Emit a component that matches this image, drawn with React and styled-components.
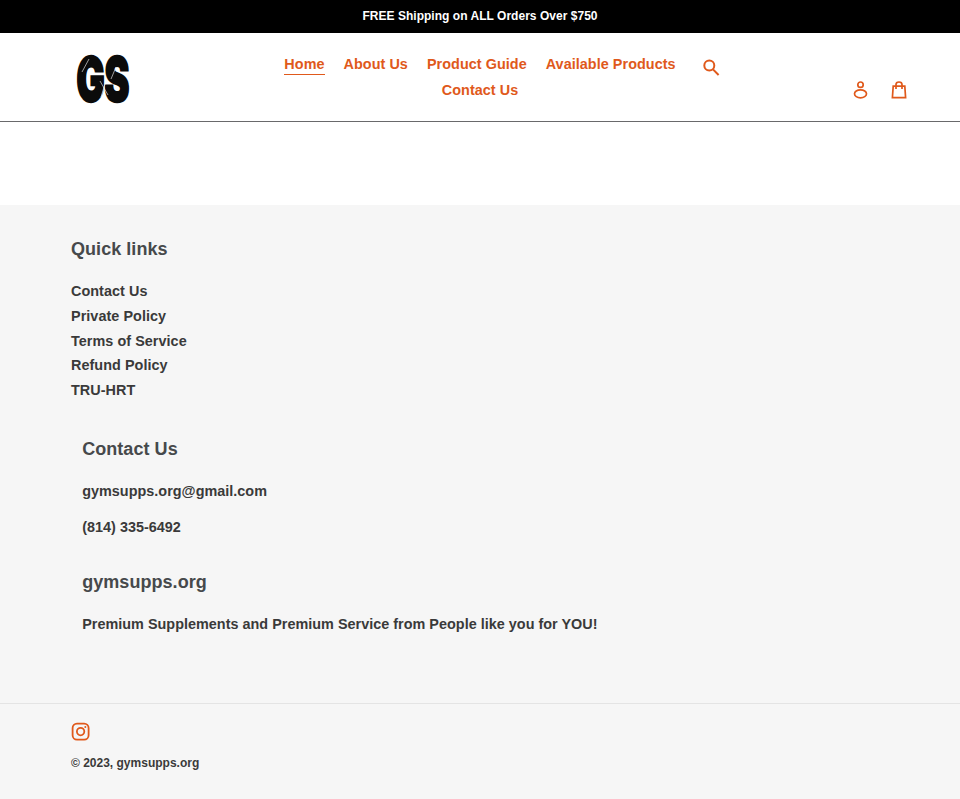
import React from "react";
import styled, { createGlobalStyle } from "styled-components";

const Global = createGlobalStyle`
  html, body { margin: 0; padding: 0; background: #fff; }
  body { font-family: "Liberation Sans", Arial, sans-serif; font-weight: 700; color: #3a3a3a; }
  a { color: inherit; text-decoration: none; }
  ul { list-style: none; margin: 0; padding: 0; }
  h4, p { margin: 0; }
`;

const Announcement = styled.div`
  height: 31px; padding-bottom: 2px; background: #000; color: #fff;
  display: flex; align-items: center; justify-content: center;
  font-size: 12px; letter-spacing: 0.03px;
`;
const Header = styled.header`
  height: 88px; border-bottom: 1px solid #69696b;
  padding: 0 53px 0 71px; display: grid;
  grid-template-columns: 160px 1fr 160px; position: relative;
`;
const LogoBox = styled.a`
  display: flex; align-items: flex-start; height: 68px; padding: 20px 0 0 4px;
`;
const Nav = styled.nav`
  display: flex; flex-wrap: wrap; justify-content: center; align-content: flex-start;
  width: 420px; margin-left: 39px; padding-top: 19px;
`;
const NavLink = styled.a`
  color: #e0591b; font-size: 14.4px; letter-spacing: 0.05px; line-height: 25.6px;
  padding: 0 9.5px; white-space: nowrap; position: relative;
  & > span { display: inline-block; line-height: 20px; border-bottom: ${p => (p.$active ? "1px solid #e0591b" : "none")}; }
`;
const Icons = styled.div`
  display: flex; align-items: flex-start; justify-content: flex-end;
  padding-top: 48px; gap: 22px; color: #e0591b;
`;
const SearchBtn = styled.a`
  position: absolute; left: 703px; top: 26px; color: #e0591b; display: block; height: 18px;
`;
const Spacer = styled.div`height: 83px;`;
const Footer = styled.footer`background: #f6f6f6; height: 594px;`;
const Inner = styled.div`padding: 36px 71px 0;`;
const Heading = styled.h4`
  font-size: 18px; font-weight: 700; letter-spacing: 0.05px; line-height: 17px; color: #46494b;
  margin-bottom: ${p => p.$mb || 0}px;
`;
const LinkItem = styled.li`
  font-size: 14.4px; letter-spacing: 0.05px; line-height: 24.75px; color: #3a3a3a;
`;
const Indented = styled.div`padding: 38px 0 0 11.2px;`;
const Para = styled.p`
  font-size: 14.4px; letter-spacing: 0.02px; line-height: 20px; color: #3a3a3a; margin-bottom: ${p => p.$mb || 0}px;
`;
const Bottom = styled.div`
  border-top: 1px solid #e4e4e4; margin-top: 68.5px; padding: 18px 71px 0;
`;
const Social = styled.a`display: block; color: #e0591b; height: 20px;`;
const Copy = styled.small`
  display: block; margin-top: 12px; font-size: 12px; line-height: 18px; font-weight: 700; color: #3a3a3a;
`;

const Logo = () => (
  <svg width="110" height="68" viewBox="0 0 110 68" role="img" aria-label="GS">
    <text transform="translate(1.5,47.5) scale(0.62,1)" fontFamily="Inter, 'DejaVu Sans', sans-serif" fontWeight="900" fontSize="60" fill="#0b0b0b" stroke="#0b0b0b" strokeWidth="2.5">GS</text>
    <path d="M7 19L14 6M26 44l4-13M25 28l8 14M36 26l5-12" stroke="#fff" strokeWidth=".6" fill="none" />
  </svg>
);
const SearchIcon = () => (
  <svg width="17" height="18" viewBox="0 0 17 18" fill="none" stroke="currentColor" strokeWidth="2">
    <circle cx="6.3" cy="6.5" r="5" /><path d="M10 10.4l5.6 5.6" />
  </svg>
);
const UserIcon = () => (
  <svg width="16" height="18" viewBox="0 0 16 18" fill="none" stroke="currentColor" strokeWidth="1.7">
    <circle cx="7.5" cy="3.7" r="2.7" /><ellipse cx="7.5" cy="12.8" rx="6" ry="4" />
  </svg>
);
const CartIcon = () => (
  <svg width="16" height="18" viewBox="0 0 16 18" fill="none" stroke="currentColor" strokeWidth="1.7">
    <path d="M2.2 5.2h11.6l.8 11.4H1.4z" /><path d="M5 8V3.6C5 2 6.2 1 8 1s3 1 3 2.6V8" />
  </svg>
);
const InstagramIcon = () => (
  <svg width="20" height="20" viewBox="0 0 20 20" fill="none" stroke="currentColor" strokeWidth="1.8">
    <rect x="1.6" y="1.6" width="16" height="16" rx="4.4" /><circle cx="9.6" cy="9.6" r="3.7" />
    <circle cx="14.3" cy="5" r="1" fill="currentColor" stroke="none" />
  </svg>
);

export default function App() {
  return (
    <>
      <Global />
      <Announcement>FREE Shipping on ALL Orders Over $750</Announcement>
      <Header>
        <LogoBox href="#"><Logo /></LogoBox>
        <Nav>
          <NavLink $active href="#"><span>Home</span></NavLink>
          <NavLink href="#"><span>About Us</span></NavLink>
          <NavLink href="#"><span>Product Guide</span></NavLink>
          <NavLink href="#"><span>Available Products</span></NavLink>
          <NavLink href="#"><span>Contact Us</span></NavLink>
        </Nav>
        <SearchBtn href="#"><SearchIcon /></SearchBtn>
        <Icons>
          <a href="#"><UserIcon /></a>
          <a href="#"><CartIcon /></a>
        </Icons>
      </Header>
      <Spacer />
      <Footer>
        <Inner>
          <Heading $mb={21}>Quick links</Heading>
          <ul>
            <LinkItem>Contact Us</LinkItem>
            <LinkItem>Private Policy</LinkItem>
            <LinkItem>Terms of Service</LinkItem>
            <LinkItem>Refund Policy</LinkItem>
            <LinkItem>TRU-HRT</LinkItem>
          </ul>
          <Indented>
            <Heading $mb={23.5}>Contact Us</Heading>
            <Para $mb={15.5}>gymsupps.org@gmail.com</Para>
            <Para $mb={37}>(814) 335-6492</Para>
            <Heading $mb={23.5}>gymsupps.org</Heading>
            <Para>Premium Supplements and Premium Service from People like you for YOU!</Para>
          </Indented>
        </Inner>
        <Bottom>
          <Social href="#"><InstagramIcon /></Social>
          <Copy>© 2023, gymsupps.org</Copy>
        </Bottom>
      </Footer>
    </>
  );
}
